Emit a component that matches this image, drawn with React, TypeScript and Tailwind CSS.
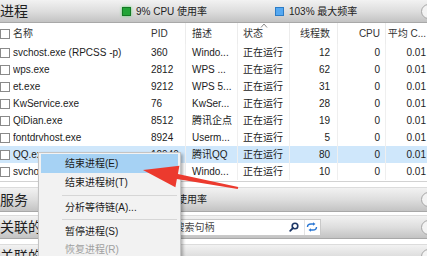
import React from "react";

type Row = {
  name: string;
  pid: string;
  desc: string;
  threads: string;
  selected?: boolean;
};

const rows: Row[] = [
  { name: "svchost.exe (RPCSS -p)", pid: "360", desc: "Windo...", threads: "12" },
  { name: "wps.exe", pid: "2812", desc: "WPS ...", threads: "62" },
  { name: "et.exe", pid: "9212", desc: "WPS 5...", threads: "31" },
  { name: "KwService.exe", pid: "76", desc: "KwSer...", threads: "28" },
  { name: "QiDian.exe", pid: "8512", desc: "腾讯企点", threads: "19" },
  { name: "fontdrvhost.exe", pid: "8924", desc: "Userm...", threads: "5" },
  { name: "QQ.exe", pid: "12940", desc: "腾讯QQ", threads: "80", selected: true },
  { name: "svchost.exe", pid: "1012", desc: "Windo...", threads: "10" },
];

const font = {
  fontFamily: '"Liberation Sans", "Noto Sans CJK SC", sans-serif',
};

function Checkbox() {
  return <div className="h-[10px] w-[10px] border border-[#8a8a8a] bg-white" />;
}

function Circle() {
  return (
    <div className="ml-auto -mr-[9px] h-[15px] w-[15px] shrink-0 rounded-full border border-[#a5a5a5] bg-[#f3f3f3]" />
  );
}

function Bar({ children, className }: { children: React.ReactNode; className?: string }) {
  return (
    <div
      className={
        "flex shrink-0 items-center border-t border-b border-t-[#dcdcdc] border-b-[#a8a8a8] bg-linear-to-b from-[#f2f2f2] via-[#dedede] to-[#c3c3c3] " +
        (className ?? "")
      }
    >
      {children}
    </div>
  );
}

function CpuIndicator({ value }: { value: string }) {
  return (
    <div className="flex w-[153px] items-center gap-[5px]">
      <div className="h-[9px] w-[9px] border border-[#147a24] bg-[#22a437] shadow-[0_0_3px_#5fd36f]" />
      <span className="text-[10px] text-[#222]">{value} CPU 使用率</span>
    </div>
  );
}

function MenuItem({ label, active, disabled, tall }: { label: string; active?: boolean; disabled?: boolean; tall?: boolean }) {
  return (
    <div
      className={
        "mx-[2px] flex items-center pl-[24px] text-[10px] " +
        (tall ? "h-[19px] " : "h-[18px] ") +
        (active ? "bg-[#a6d2f4] " : "") +
        (disabled ? "text-[#a0a0a0]" : "text-[#1b1b1b]")
      }
    >
      {label}
    </div>
  );
}

function Separator() {
  return <div className="my-[2.5px] ml-[23px] mr-[3px] h-px bg-[#d6d6d6]" />;
}

export default function App() {
  return (
    <div className="relative h-[256px] w-[427px] overflow-hidden bg-white" style={font}>
      {/* NOTE 进程 header */}
      <Bar className="h-[23px] border-t-0">
        <div className="w-[122px] text-[14px] leading-none text-[#1e1e1e]">进程</div>
        <CpuIndicator value="9%" />
        <div className="flex items-center gap-[5px]">
          <div className="h-[9px] w-[9px] border border-[#2c7cc6] bg-[#55a8f1]" />
          <span className="text-[10px] text-[#222]">103% 最大频率</span>
        </div>
        <Circle />
      </Bar>

      {/* NOTE Column headers */}
      <div className="flex h-[21px] items-center text-[10px] text-[#333]">
        <div className="flex w-[13px] items-center">
          <Checkbox />
        </div>
        <div className="w-[133px]">名称</div>
        <div className="flex h-full w-[40px] items-center border-r border-[#ececec] pl-[5px]">PID</div>
        <div className="flex h-full w-[52px] items-center border-r border-[#ececec] pl-[6px]">描述</div>
        <div className="relative flex h-full w-[52px] items-center border-r border-[#ececec] pl-[5px]">
          状态
          <svg className="absolute left-[22px] top-0" width="8" height="5" viewBox="0 0 8 5">
            <path d="M1 4.5 L4 1 L7 4.5" fill="none" stroke="#8a8a8a" strokeWidth="1" />
          </svg>
        </div>
        <div className="flex h-full w-[48px] items-center justify-end border-r border-[#ececec] pr-[7px]">线程数</div>
        <div className="flex h-full w-[48px] items-center justify-end border-r border-[#ececec] pr-[5px]">CPU</div>
        <div className="flex h-full w-[41px] items-center justify-end pr-[1px]">平均 C...</div>
      </div>

      {/* NOTE Process rows */}
      <div className="flex flex-col text-[10px] text-[#1c1c1c]">
        {rows.map((r) => (
          <div key={r.name + r.pid} className={"flex h-[17px] items-center " + (r.selected ? "bg-[#cfe7fb]" : "")}>
            <div className="flex w-[13px] items-center">
              <Checkbox />
            </div>
            <div className="w-[133px] truncate">{r.name}</div>
            <div className="flex h-full w-[40px] items-center border-r border-[#efefef] pl-[5px]">{r.pid}</div>
            <div className="flex h-full w-[52px] items-center border-r border-[#efefef] pl-[6px] whitespace-nowrap">{r.desc}</div>
            <div className="flex h-full w-[52px] items-center border-r border-[#efefef] pl-[5px]">正在运行</div>
            <div className="flex h-full w-[48px] items-center justify-end border-r border-[#efefef] pr-[7px]">{r.threads}</div>
            <div className="flex h-full w-[48px] items-center justify-end border-r border-[#efefef] pr-[5px]">0</div>
            <div className="flex h-full w-[41px] items-center justify-end pr-[1px]">0.01</div>
          </div>
        ))}
      </div>
      <div className="mt-[1px] h-px bg-[#d2d2d2]" />
      <div className="h-[5px]" />

      {/* NOTE 服务 */}
      <Bar className="h-[25px]">
        <div className="w-[122px] text-[14px] leading-none text-[#1e1e1e]">服务</div>
        <CpuIndicator value="0%" />
        <Circle />
      </Bar>
      <div className="h-[3px]" />

      {/* NOTE 关联的句柄 */}
      <Bar className="h-[24px]">
        <div className="text-[14px] leading-none text-[#1e1e1e]">关联的句柄</div>
        <div className="ml-auto flex h-[17px] w-[150px] items-center border border-[#c9c9c9] bg-white">
          <span className="flex-1 pl-[3px] text-[10px] text-[#4a4a4a]">搜索句柄</span>
          <svg width="10" height="10" viewBox="0 0 10 10" className="mr-[5px]">
            <circle cx="6" cy="4" r="2.8" fill="none" stroke="#1d3766" strokeWidth="1.6" />
            <path d="M4 6 L1.2 8.8" stroke="#1d3766" strokeWidth="1.8" strokeLinecap="round" />
          </svg>
          <div className="flex h-full w-[16px] items-center justify-center border-l border-[#e3e3e3]">
            <svg width="12" height="10" viewBox="0 0 12 10">
              <path d="M1.5 5 Q1.5 2 5 2 L8 2" fill="none" stroke="#2b78d4" strokeWidth="1.4" />
              <path d="M7 0.3 L9.5 2 L7 3.7 Z" fill="#2b78d4" />
              <path d="M10.5 5 Q10.5 8 7 8 L4 8" fill="none" stroke="#2b78d4" strokeWidth="1.4" />
              <path d="M5 6.3 L2.5 8 L5 9.7 Z" fill="#2b78d4" />
            </svg>
          </div>
        </div>
        <Circle />
      </Bar>
      <div className="h-[5px]" />

      {/* NOTE 关联的模块 */}
      <Bar className="h-[24px]">
        <div className="text-[14px] leading-none text-[#1e1e1e]">关联的模块</div>
        <Circle />
      </Bar>

      {/* NOTE Context menu */}
      <div className="absolute left-[38px] top-[152px] w-[143px] border border-[#c4c4c4] bg-[#f2f2f2] pt-[1px] shadow-[2px_2px_3px_rgba(0,0,0,0.3)]">
        <MenuItem label="结束进程(E)" active tall />
        <MenuItem label="结束进程树(T)" tall />
        <Separator />
        <MenuItem label="分析等待链(A)..." />
        <Separator />
        <MenuItem label="暂停进程(S)" />
        <MenuItem label="恢复进程(R)" disabled />
      </div>

      {/* NOTE Red arrow annotation */}
      <svg className="pointer-events-none absolute left-0 top-0" width="427" height="256" viewBox="0 0 427 256">
        <polygon
          points="143,170 179.4,165.7 177.9,174 238.2,187 237.8,189 176.9,179 175.4,187.3"
          fill="#ec3a2e"
        />
      </svg>
    </div>
  );
}
